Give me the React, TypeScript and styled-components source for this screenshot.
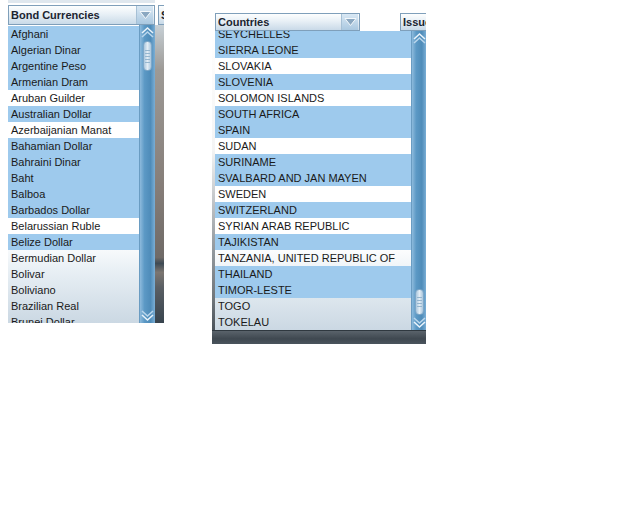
import styled, { createGlobalStyle } from "styled-components";

const GlobalStyle = createGlobalStyle`
  html, body {
    margin: 0;
    padding: 0;
    background: #fff;
  }
  body {
    font-family: "Liberation Sans", Arial, sans-serif;
  }
`;

const Page = styled.div`
  display: flex;
  align-items: flex-start;
  width: 640px;
  height: 512px;
  background: #fff;
`;

const Widget = styled.div<{ $width: number; $top: number; $left: number }>`
  flex-shrink: 0;
  width: ${(p) => p.$width}px;
  margin-top: ${(p) => p.$top}px;
  margin-left: ${(p) => p.$left}px;
  overflow: hidden;
`;

const TopStrip = styled.div`
  width: 147px;
  height: 3px;
  margin: 0 0 2px 8px;
  background: #dfe7ee;
`;

const HeaderRow = styled.div<{ $inset: number; $gap: number; $height: number }>`
  display: flex;
  gap: ${(p) => p.$gap}px;
  height: ${(p) => p.$height}px;
  padding-left: ${(p) => p.$inset}px;
`;

const Combo = styled.div<{ $width: number }>`
  flex-shrink: 0;
  box-sizing: border-box;
  display: flex;
  align-items: center;
  width: ${(p) => p.$width}px;
  height: 100%;
  border: 1px solid #7f9fba;
  background: linear-gradient(#fdfefe, #e8f0f6 45%, #c9dae8);
`;

const ComboLabel = styled.span`
  flex: 1;
  padding-left: 2px;
  font-size: 11px;
  font-weight: bold;
  color: #1b2430;
  white-space: nowrap;
  overflow: hidden;
`;

const ArrowButton = styled.div`
  display: flex;
  align-items: center;
  justify-content: center;
  width: 16px;
  height: 100%;
  margin-right: 1px;
  background: linear-gradient(#d9e8f4, #aac8e0);
  border-left: 1px solid #a6c0d5;
`;

const Body = styled.div<{ $inset: number; $height: number; $backdrop: string }>`
  display: flex;
  height: ${(p) => p.$height}px;
  padding-left: ${(p) => p.$inset}px;
  background: ${(p) => p.$backdrop};
`;

const ListBox = styled.div<{ $width: number }>`
  flex-shrink: 0;
  display: flex;
  width: ${(p) => p.$width}px;
  height: 100%;
`;

const Items = styled.div`
  flex: 1;
  overflow: hidden;
  background: linear-gradient(#ffffff 0%, #ffffff 72%, #e9f0f5 82%, #cbd8e3 100%);
`;

const ItemsInner = styled.div<{ $offset: number }>`
  margin-top: ${(p) => p.$offset}px;
`;

const Row = styled.div<{ $selected: boolean }>`
  height: 16px;
  padding-left: 3px;
  line-height: 16px;
  font-size: 11px;
  color: #1a1a1a;
  white-space: nowrap;
  overflow: hidden;
  background: ${(p) => (p.$selected ? "#9ecaed" : "transparent")};
`;

const Scroll = styled.div<{ $width: number }>`
  flex-shrink: 0;
  display: flex;
  flex-direction: column;
  width: ${(p) => p.$width}px;
  background: linear-gradient(90deg, #8dbadc, #5c99c5 30%, #4f8cb9 70%, #7aaed5);
  border-left: 1px solid #6a9cc2;
`;

const ScrollEnd = styled.div`
  display: flex;
  justify-content: center;
  height: 14px;
`;

const Track = styled.div<{ $thumbTop: number }>`
  flex: 1;
  display: flex;
  justify-content: center;
  padding-top: ${(p) => p.$thumbTop}px;
`;

const Thumb = styled.div<{ $height: number }>`
  box-sizing: border-box;
  width: 9px;
  height: ${(p) => p.$height}px;
  border: 1px solid #7ea7c8;
  border-radius: 4px;
  background:
    repeating-linear-gradient(transparent 0 2px, #95b6cf 2px 3px) center / 5px 60% no-repeat,
    linear-gradient(90deg, #a9c6dd, #e3edf5 50%, #a9c6dd);
`;

const Side = styled.div<{ $fill: string }>`
  flex: 1;
  background: ${(p) => p.$fill};
`;

const BottomBand = styled.div`
  height: 13px;
  background: linear-gradient(#5a636b, #3f4850 60%, #4a545d);
  border-top: 1px solid #2f383f;
`;

function DownTriangle() {
  return (
    <svg width="13" height="10" viewBox="0 0 13 10">
      <path d="M1 1.5 H12 L6.5 8.5 Z" fill="#8ba8c1" stroke="#f4f8fb" strokeWidth="1" />
    </svg>
  );
}

function Chevrons({ up }: { up: boolean }) {
  return (
    <svg width="13" height="14" viewBox="0 0 13 14" style={{ transform: up ? "none" : "scaleY(-1)" }}>
      <path d="M1 8 L6.5 3 L12 8" fill="none" stroke="#e9f3fb" strokeWidth="1.6" />
      <path d="M1 12 L6.5 7 L12 12" fill="none" stroke="#b9d6ec" strokeWidth="1.6" />
    </svg>
  );
}

type Item = { label: string; sel: boolean };

function ScrollBar({ width, thumbTop, thumbHeight }: { width: number; thumbTop: number; thumbHeight: number }) {
  return (
    <Scroll $width={width}>
      <ScrollEnd>
        <Chevrons up />
      </ScrollEnd>
      <Track $thumbTop={thumbTop}>
        <Thumb $height={thumbHeight} />
      </Track>
      <ScrollEnd>
        <Chevrons up={false} />
      </ScrollEnd>
    </Scroll>
  );
}

const b = (label: string): Item => ({ label, sel: true });
const w = (label: string): Item => ({ label, sel: false });

const currencies: Item[] = [
  b("Afghani"),
  b("Algerian Dinar"),
  b("Argentine Peso"),
  b("Armenian Dram"),
  w("Aruban Guilder"),
  b("Australian Dollar"),
  w("Azerbaijanian Manat"),
  b("Bahamian Dollar"),
  b("Bahraini Dinar"),
  b("Baht"),
  b("Balboa"),
  b("Barbados Dollar"),
  w("Belarussian Ruble"),
  b("Belize Dollar"),
  w("Bermudian Dollar"),
  w("Bolivar"),
  w("Boliviano"),
  w("Brazilian Real"),
  w("Brunei Dollar"),
];

const countries: Item[] = [
  b("SEYCHELLES"),
  b("SIERRA LEONE"),
  w("SLOVAKIA"),
  b("SLOVENIA"),
  w("SOLOMON ISLANDS"),
  b("SOUTH AFRICA"),
  b("SPAIN"),
  w("SUDAN"),
  b("SURINAME"),
  b("SVALBARD AND JAN MAYEN"),
  w("SWEDEN"),
  b("SWITZERLAND"),
  w("SYRIAN ARAB REPUBLIC"),
  b("TAJIKISTAN"),
  w("TANZANIA, UNITED REPUBLIC OF"),
  b("THAILAND"),
  b("TIMOR-LESTE"),
  w("TOGO"),
  w("TOKELAU"),
];

const leftSide =
  "linear-gradient(#c7d0d6 0%, #9d9a96 15%, #857d78 55%, #6f6a67 78%, #3e4a54 80%, #7c7671 83%, #5a5f64 88%, #38444e 100%)";
const rightBackdrop =
  "linear-gradient(#ffffff 0%, #f4f4f4 40%, #9aa0a5 70%, #6f757a 90%, #4a535b 100%)";

export default function App() {
  return (
    <Page>
      <GlobalStyle />
      <Widget $width={164} $top={0} $left={0}>
        <TopStrip />
        <HeaderRow $inset={8} $gap={3} $height={20}>
          <Combo $width={147}>
            <ComboLabel>Bond Currencies</ComboLabel>
            <ArrowButton>
              <DownTriangle />
            </ArrowButton>
          </Combo>
          <Combo $width={60}>
            <ComboLabel>Sectors</ComboLabel>
          </Combo>
        </HeaderRow>
        <Body $inset={8} $height={298} $backdrop="#fff">
          <ListBox $width={147}>
            <Items>
              <ItemsInner $offset={1}>
                {currencies.map((item) => (
                  <Row key={item.label} $selected={item.sel}>
                    {item.label}
                  </Row>
                ))}
              </ItemsInner>
            </Items>
            <ScrollBar width={15} thumbTop={2} thumbHeight={30} />
          </ListBox>
          <Side $fill={leftSide} />
        </Body>
      </Widget>

      <Widget $width={214} $top={13} $left={48}>
        <HeaderRow $inset={3} $gap={40} $height={18}>
          <Combo $width={145}>
            <ComboLabel>Countries</ComboLabel>
            <ArrowButton>
              <DownTriangle />
            </ArrowButton>
          </Combo>
          <Combo $width={60}>
            <ComboLabel>Issuer</ComboLabel>
          </Combo>
        </HeaderRow>
        <Body $inset={3} $height={299} $backdrop={rightBackdrop}>
          <ListBox $width={211}>
            <Items>
              <ItemsInner $offset={-5}>
                {countries.map((item) => (
                  <Row key={item.label} $selected={item.sel}>
                    {item.label}
                  </Row>
                ))}
              </ItemsInner>
            </Items>
            <ScrollBar width={14} thumbTop={244} thumbHeight={26} />
          </ListBox>
        </Body>
        <BottomBand />
      </Widget>
    </Page>
  );
}
